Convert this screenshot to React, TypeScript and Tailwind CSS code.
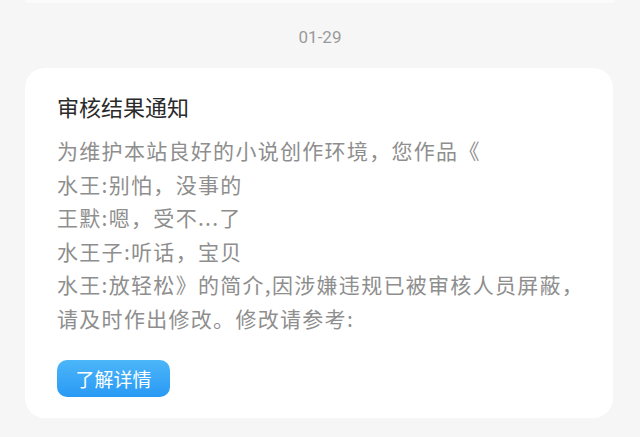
export default function App() {
  const lines = [
    "为维护本站良好的小说创作环境，您作品《",
    "水王:别怕，没事的",
    "王默:嗯，受不...了",
    "水王子:听话，宝贝",
    "水王:放轻松》的简介,因涉嫌违规已被审核人员屏蔽，",
    "请及时作出修改。修改请参考:",
  ];
  return (
    <div
      className="w-[640px] h-[437px] overflow-hidden bg-[#f7f6f7] flex flex-col"
      style={{ fontFamily: '"Noto Sans CJK SC", "Noto Sans", sans-serif' }}
    >
      <div className="mx-[25px] h-[3px] bg-[#fcfbfc] rounded-b-[20px] shrink-0" />
      <div className="h-[65px] shrink-0 flex items-center justify-center pt-[4px]">
        <span className="text-[17px] text-[#9a9a9a]" style={{ fontFamily: 'Roboto, "Noto Sans", sans-serif' }}>01-29</span>
      </div>
      <div className="mx-[25px] w-[588px] h-[350px] shrink-0 bg-white rounded-[20px] pl-[32px] pt-[22px]">
        <div className="text-[22px] leading-[32px] font-normal text-[#2a2a2a]">审核结果通知</div>
        <div className="mt-[12px] text-[21px] leading-[33.6px] tracking-[1.3px] text-[#8e8e8e]">
          {lines.map((l, i) => (
            <div key={i} className="whitespace-nowrap">{l}</div>
          ))}
        </div>
        <button className="mt-[24px] w-[113px] h-[37px] rounded-[10px] bg-gradient-to-b from-[#4cb6f9] to-[#2899f4] text-white text-[19px] leading-[37px] flex items-center justify-center">
          了解详情
        </button>
      </div>
    </div>
  );
}
